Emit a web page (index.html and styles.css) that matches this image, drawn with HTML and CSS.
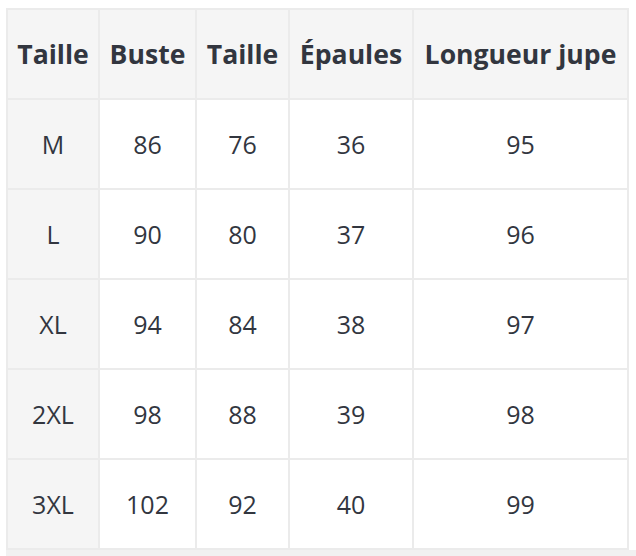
FILE: index.html
```html
<!DOCTYPE html>
<html lang="fr">
<head>
<meta charset="utf-8">
<title>Guide des tailles</title>
<link rel="stylesheet" href="styles.css">
</head>
<body>
<div class="wrap">
  <table class="size-table">
    <colgroup>
      <col class="c1"><col class="c2"><col class="c3"><col class="c4"><col class="c5">
    </colgroup>
    <thead>
      <tr><th>Taille</th><th>Buste</th><th>Taille</th><th>Épaules</th><th>Longueur jupe</th></tr>
    </thead>
    <tbody>
      <tr><th>M</th><td>86</td><td>76</td><td>36</td><td>95</td></tr>
      <tr><th>L</th><td>90</td><td>80</td><td>37</td><td>96</td></tr>
      <tr><th>XL</th><td>94</td><td>84</td><td>38</td><td>97</td></tr>
      <tr><th>2XL</th><td>98</td><td>88</td><td>39</td><td>98</td></tr>
      <tr><th>3XL</th><td>102</td><td>92</td><td>40</td><td>99</td></tr>
    </tbody>
  </table>
  <div class="scroll-track"></div>
</div>
</body>
</html>
```
FILE: styles.css
```css
html, body {
  margin: 0;
  padding: 0;
  background: #ffffff;
}
body {
  font-family: "Open Sans", "Noto Sans", sans-serif;
  color: #32363f;
}
.wrap {
  padding: 8px 0 0 6px;
}
.size-table {
  border-collapse: separate;
  border-spacing: 0;
  border-left: 2px solid #ebebeb;
  border-top: 2px solid #ebebeb;
  table-layout: fixed;
  width: 623px;
}
.c1 { width: 92px; }
.c2 { width: 97px; }
.c3 { width: 93px; }
.c4 { width: 124px; }
.c5 { width: 215px; }
.size-table th,
.size-table td {
  border-right: 2px solid #ebebeb;
  border-bottom: 2px solid #ebebeb;
  height: 88px;
  padding: 0;
  text-align: center;
  vertical-align: middle;
  font-size: 25px;
  line-height: 1;
  box-sizing: content-box;
  white-space: nowrap;
}
.size-table thead th {
  background: #f5f5f5;
  font-weight: 700;
  font-size: 26.6px;
}
.size-table tbody th {
  background: #f5f5f5;
  font-weight: 400;
}
.size-table td {
  background: #ffffff;
  font-weight: 400;
}
.scroll-track {
  height: 6px;
  background: #f1f1f1;
  width: 630px;
}
```
